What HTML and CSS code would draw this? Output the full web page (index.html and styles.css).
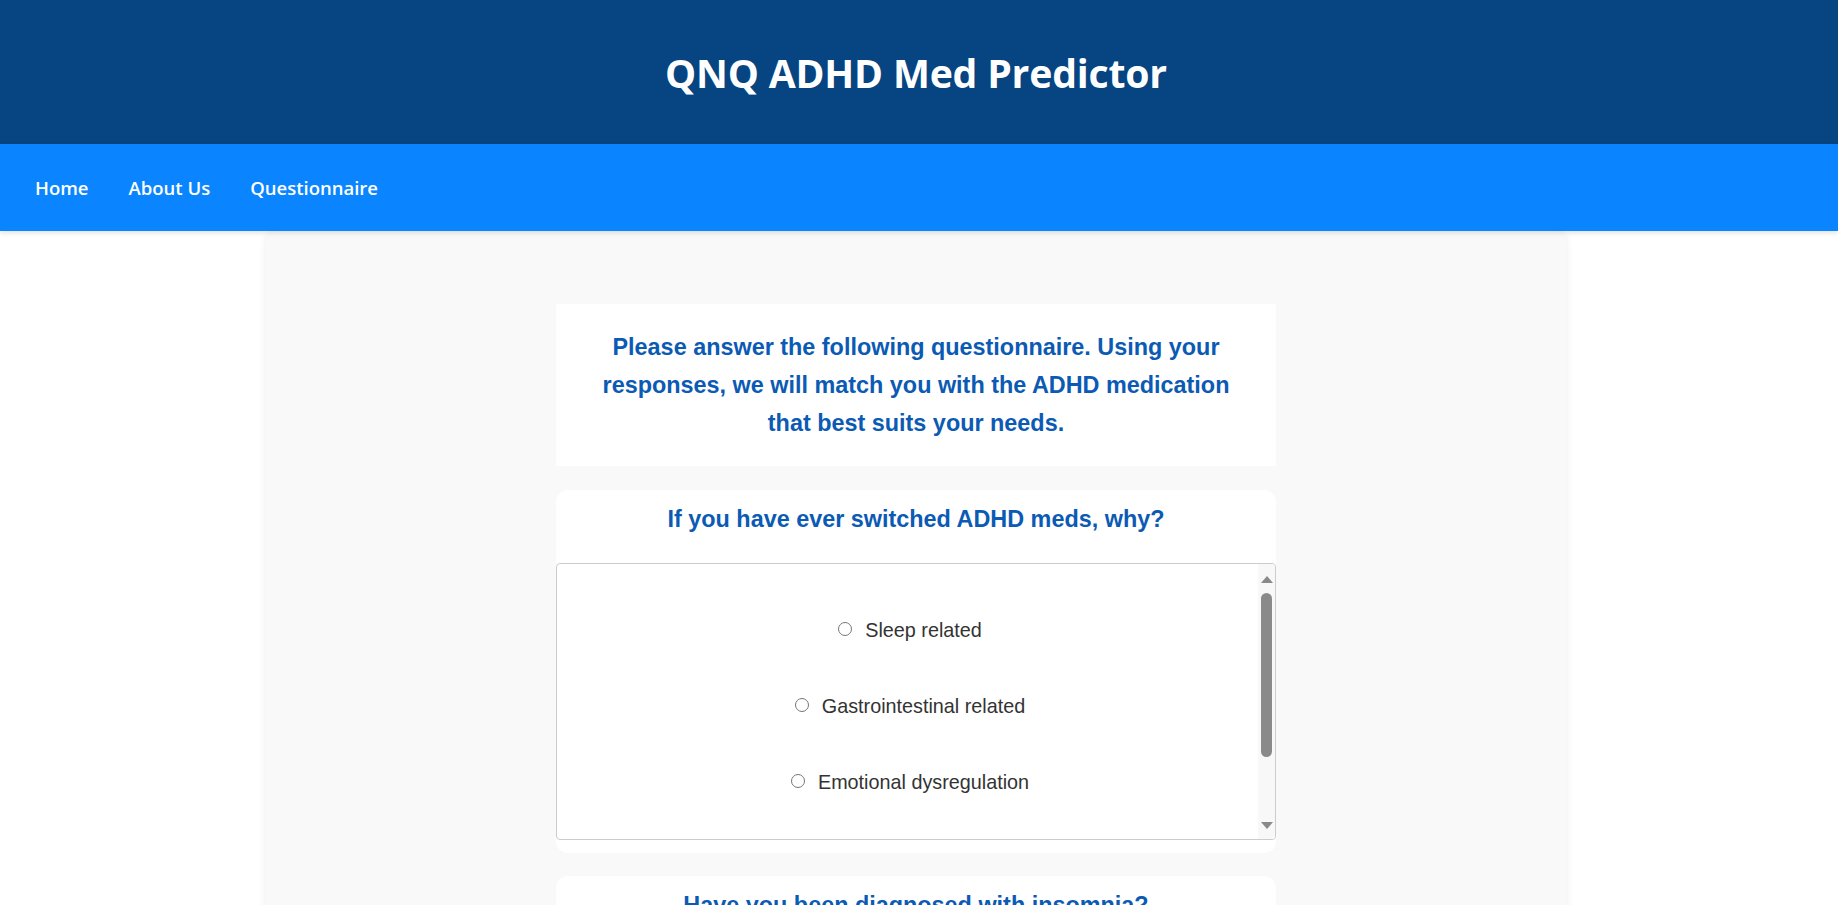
FILE: index.html
```html
<!DOCTYPE html>
<html lang="en">
<head>
<meta charset="utf-8">
<title>QNQ ADHD Med Predictor</title>
<link rel="stylesheet" href="styles.css">
</head>
<body>
<header class="site-header">
  <h1 class="site-title">QNQ ADHD Med Predictor</h1>
</header>
<nav class="site-nav">
  <a class="nav-link" href="#">Home</a>
  <a class="nav-link" href="#">About Us</a>
  <a class="nav-link" href="#">Questionnaire</a>
</nav>
<main class="container">
  <section class="intro-card">
    <p class="intro-text">Please answer the following questionnaire. Using your responses, we will match you with the ADHD medication that best suits your needs.</p>
  </section>

  <section class="question-card">
    <h2 class="question-title">If you have ever switched ADHD meds, why?</h2>
    <div class="options-box">
      <div class="options-list">
        <label class="option"><input type="radio" name="switch" class="radio"><span>Sleep related</span></label>
        <label class="option"><input type="radio" name="switch" class="radio"><span>Gastrointestinal related</span></label>
        <label class="option"><input type="radio" name="switch" class="radio"><span>Emotional dysregulation</span></label>
        <label class="option"><input type="radio" name="switch" class="radio"><span>Other</span></label>
      </div>
      <div class="scrollbar" aria-hidden="true">
        <div class="scroll-btn"><span class="arrow-up"></span></div>
        <div class="scroll-track"><div class="scroll-thumb"></div></div>
        <div class="scroll-btn"><span class="arrow-down"></span></div>
      </div>
    </div>
  </section>

  <section class="question-card">
    <h2 class="question-title">Have you been diagnosed with insomnia?</h2>
    <div class="options-box">
      <div class="options-list">
        <label class="option"><input type="radio" name="insomnia" class="radio"><span>Yes</span></label>
        <label class="option"><input type="radio" name="insomnia" class="radio"><span>No</span></label>
      </div>
    </div>
  </section>
</main>
</body>
</html>
```

FILE: styles.css
```css
html {
  scrollbar-width: none;
}

body {
  margin: 0;
  background: #ffffff;
  font-family: "Liberation Sans", Arial, sans-serif;
  font-size: 18px;
}

.site-header {
  background: #064482;
  height: 144px;
  display: flex;
  align-items: center;
  justify-content: center;
  padding-right: 6px;
}

.site-title {
  margin: 0;
  color: #ffffff;
  font-family: "Open Sans", "Noto Sans", sans-serif;
  font-weight: 700;
  font-size: 39.2px;
  letter-spacing: -0.2px;
}

.site-nav {
  background: #0a85ff;
  height: 87px;
  display: flex;
  align-items: center;
  gap: 40px;
  padding-left: 35px;
  box-shadow: 0 2px 5px rgba(0, 0, 0, 0.12);
  position: relative;
  z-index: 2;
}

.nav-link {
  color: #ffffff;
  text-decoration: none;
  font-family: "Open Sans", "Noto Sans", sans-serif;
  font-weight: 600;
  font-size: 18.5px;
}

.container {
  width: 1300px;
  margin-left: calc(50% - 653px);
  background: #f9f9f9;
  border-radius: 12px 12px 0 0;
  box-shadow: 0 0 8px rgba(0, 0, 0, 0.08);
  padding-top: 73px;
  padding-bottom: 40px;
}

.intro-card {
  width: 720px;
  box-sizing: border-box;
  margin: 0 auto 24px;
  background: #ffffff;
  padding: 24px 30px;
}

.intro-text {
  margin: 0;
  text-align: center;
  color: #0b5ab4;
  font-weight: 700;
  font-size: 23.4px;
  line-height: 38px;
}

.question-card {
  width: 720px;
  box-sizing: border-box;
  margin: 0 auto 23px;
  background: #ffffff;
  border-radius: 12px;
  padding-bottom: 13px;
}

.question-title {
  margin: 0 0 30px;
  padding-top: 16px;
  text-align: center;
  color: #0b5ab4;
  font-weight: 700;
  font-size: 23.4px;
  line-height: 27px;
}

.options-box {
  height: 277px;
  box-sizing: border-box;
  border: 1px solid #cccccc;
  border-radius: 4px;
  display: flex;
  overflow: hidden;
}

.options-list {
  flex: 1;
  padding-top: 29px;
  overflow: hidden;
}

.option {
  display: flex;
  align-items: center;
  justify-content: center;
  padding: 26px 0 27px;
  line-height: 23px;
  font-size: 19.8px;
  color: #333333;
}

.radio {
  width: 14px;
  height: 14px;
  margin: 0 13px 3px 5px;
}

.scrollbar {
  width: 17px;
  flex: none;
  display: flex;
  flex-direction: column;
  background: #f8f8f8;
}

.scroll-btn {
  height: 17px;
  flex: none;
  display: flex;
  align-items: center;
  justify-content: center;
}

.arrow-up {
  width: 0;
  height: 0;
  border-left: 6px solid transparent;
  border-right: 6px solid transparent;
  border-bottom: 7px solid #8a8a8a;
  margin-top: 13px;
}

.arrow-down {
  width: 0;
  height: 0;
  border-left: 6px solid transparent;
  border-right: 6px solid transparent;
  border-top: 7px solid #8a8a8a;
  margin-top: -11px;
}

.scroll-track {
  flex: 1;
  padding: 12px 3px 0;
}

.scroll-thumb {
  height: 164px;
  background: #8a8a8a;
  border-radius: 6px;
}
```
